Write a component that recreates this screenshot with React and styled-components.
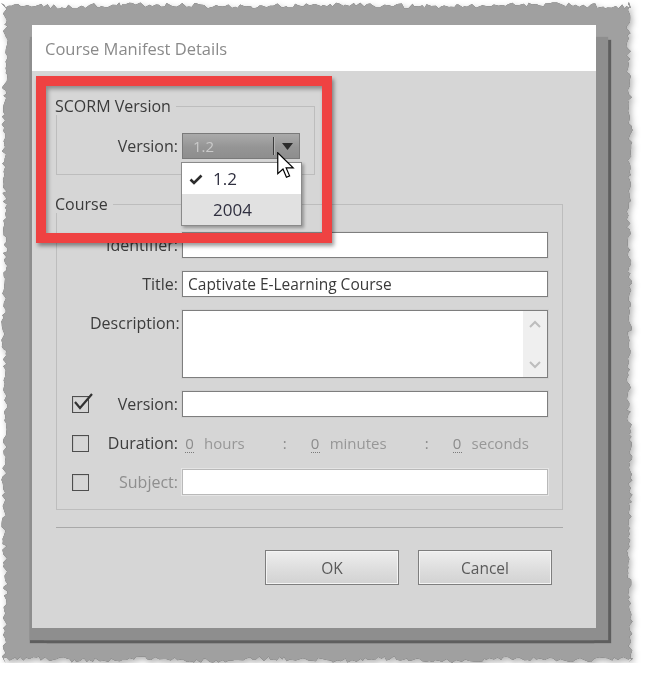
import React from 'react';
import styled, { createGlobalStyle } from 'styled-components';

const GlobalStyle = createGlobalStyle`
  html, body {
    margin: 0;
    padding: 0;
    background: #ffffff;
  }
  body {
    font-family: 'Open Sans', 'Liberation Sans', sans-serif;
  }
`;

// deterministic jagged outline for the torn-paper frame
const seedRand = (seed) => {
  let s = seed;
  return () => {
    s = (s * 16807) % 2147483647;
    return s / 2147483647;
  };
};

const tornEdge = (w, h, amp) => {
  const r = seedRand(11);
  const off = (t, f) => r() * amp * 0.7 + (Math.sin(t / f) + 1) * amp * 0.15;
  const step = () => 1.5 + r() * 3.5;
  const pts = [];
  for (let x = 0; x < w; x += step()) pts.push([x, off(x, 31)]);
  for (let y = 0; y < h; y += step()) pts.push([w - off(y, 27), y]);
  for (let x = w; x > 0; x -= step()) pts.push([x, h - off(x, 19)]);
  for (let y = h; y > 0; y -= step()) pts.push([off(y, 29), y]);
  return `polygon(${pts.map(([x, y]) => `${x.toFixed(1)}px ${y.toFixed(1)}px`).join(', ')})`;
};

const PAPER_W = 632;
const PAPER_H = 661;
const paperClip = tornEdge(PAPER_W, PAPER_H, 7);

const Shadow = styled.div`
  width: ${PAPER_W}px;
  height: ${PAPER_H}px;
  margin: 2px 0 0 1px;
  filter: drop-shadow(0 0 0.6px #555555) drop-shadow(2px 3px 3px rgba(0, 0, 0, 0.3));
`;

const Paper = styled.div`
  width: 100%;
  height: 100%;
  box-sizing: border-box;
  padding: 23px 0 0 31px;
  background: #a0a0a0;
  clip-path: ${paperClip};
`;

const Dialog = styled.div`
  position: relative;
  width: 564px;
  height: 603px;
  background: #d6d6d6;
  box-shadow: 12px 12px 1px 0 #8e8e8e, -2px 12px 1px 0 #8e8e8e, 15px 15px 1px 0 #5e5e5e,
    -2px 15px 1px 0 #5e5e5e;
`;

const TitleBar = styled.div`
  height: 46px;
  display: flex;
  align-items: center;
  padding-left: 13px;
  background: #ffffff;
  font-size: 16.5px;
  color: #8a8a8a;
`;

const Body = styled.div`
  padding: 26px 33px 0 24px;
`;

const Group = styled.fieldset`
  margin: ${(p) => p.$mt || 0}px 0 0 0;
  padding: ${(p) => p.$pad};
  width: ${(p) => p.$w}px;
  box-sizing: border-box;
  min-width: 0;
  border: 1px solid #bdbdbd;
`;

const Legend = styled.legend`
  margin-left: -2px;
  padding: 0 5px 0 0;
  font-size: 16px;
  line-height: 18px;
  color: #3a3a3a;
`;

const SelectRow = styled.div`
  display: flex;
  align-items: center;
`;

const Label = styled.div`
  width: ${(p) => p.$w || 92}px;
  box-sizing: border-box;
  padding-right: 4px;
  text-align: right;
  font-size: 16px;
  line-height: 26px;
  color: ${(p) => (p.$disabled ? '#8e8e8e' : '#3c3c3c')};
  align-self: ${(p) => (p.$top ? 'start' : 'center')};
  white-space: nowrap;
`;

const Select = styled.div`
  position: relative;
  width: 118px;
  height: 26px;
  box-sizing: border-box;
  display: flex;
  align-items: center;
  padding-left: 10px;
  border: 1px solid #7a7a7a;
  background: linear-gradient(#aaaaaa, #959595 55%, #8e8e8e);
  font-size: 15px;
  color: #cacaca;
`;

const SelectValue = styled.span`
  flex: 1;
`;

const SelectDivider = styled.span`
  width: 1px;
  height: 18px;
  background: #3c3c3c;
  box-shadow: 1px 0 0 #b5b5b5;
  margin-right: 8px;
`;

const Menu = styled.div`
  position: absolute;
  left: -2px;
  top: 28px;
  width: 121px;
  box-sizing: border-box;
  border: 1px solid #8a8a8a;
  background: #e1e1e1;
  box-shadow: 2px 2px 3px rgba(0, 0, 0, 0.3);
  z-index: 2;
`;

const MenuItem = styled.div`
  position: relative;
  height: 31px;
  display: flex;
  align-items: center;
  padding-left: 31px;
  font-size: 17px;
  color: #303040;
  background: ${(p) => (p.$active ? '#ffffff' : '#e1e1e1')};
`;

const CheckGlyph = styled.svg`
  position: absolute;
  left: 7px;
  top: 11px;
`;

const Cursor = styled.svg`
  position: absolute;
  left: 94px;
  top: 18px;
  z-index: 3;
`;

const Fields = styled.div`
  display: grid;
  grid-template-columns: 18px 92px 366px;
  row-gap: 13px;
  align-items: center;
  padding-left: 15px;
`;

const Box = styled.span`
  position: relative;
  width: 17px;
  height: 17px;
  box-sizing: border-box;
  border: 1px solid #4e4e4e;
  box-shadow: inset 1px 1px 0 #c8c8c8;
`;

const BoxTick = styled.svg`
  position: absolute;
  left: -1px;
  top: -5px;
  overflow: visible;
`;

const Input = styled.div`
  grid-column: 3;
  height: ${(p) => p.$h || 26}px;
  box-sizing: border-box;
  display: flex;
  align-items: ${(p) => (p.$multi ? 'stretch' : 'center')};
  padding-left: 5px;
  background: #ffffff;
  border: 1px solid ${(p) => (p.$disabled ? '#b9b9b9' : '#7e7e7e')};
  box-shadow: 0 0 0 1px ${(p) => (p.$disabled ? '#e4e4e4' : '#cfcfcf')};
  font-size: 15.5px;
  color: #3a3a3a;
`;

const InputText = styled.span`
  flex: 1;
`;

const ScrollStrip = styled.div`
  width: 24px;
  background: #efefef;
  display: flex;
  flex-direction: column;
  justify-content: space-between;
  align-items: center;
  padding: 9px 0 8px;
`;

const Duration = styled.div`
  grid-column: 3;
  height: 26px;
  display: flex;
  align-items: center;
  font-size: 15px;
  color: #979797;
`;

const Num = styled.span`
  margin-left: 3px;
  width: 9px;
  text-align: center;
  color: #8c8c8c;
  line-height: 18px;
  border-bottom: 1px dotted #7a7a7a;
`;

const Unit = styled.span`
  margin-left: 10px;
  margin-right: ${(p) => (p.$last ? 0 : 38)}px;
`;

const Colon = styled.span`
  margin-right: 21px;
  color: #8a8a8a;
`;

const Separator = styled.div`
  margin-top: 17px;
  height: 1px;
  background: #a9a9a9;
`;

const Buttons = styled.div`
  display: flex;
  justify-content: flex-end;
  gap: 19px;
  margin: 22px 11px 0 0;
`;

const Button = styled.button`
  width: 134px;
  height: 35px;
  box-sizing: border-box;
  border: 1px solid #7e7e7e;
  background: linear-gradient(#eeeeee, #dcdcdc 60%, #d2d2d2);
  box-shadow: inset 0 0 0 1px #f4f4f4;
  font-family: 'Open Sans', 'Liberation Sans', sans-serif;
  font-size: 15.5px;
  color: #5a5a5a;
  padding: 0;
`;

const Highlight = styled.div`
  position: absolute;
  left: 4px;
  top: 51px;
  width: 296px;
  height: 167px;
  box-sizing: border-box;
  border: 10px solid #ef4242;
  box-shadow: 2px 3px 4px rgba(0, 0, 0, 0.4), inset 2px 3px 4px rgba(0, 0, 0, 0.35);
  pointer-events: none;
  z-index: 1;
`;

const Chevron = ({ up }) => (
  <svg width="12" height="8" viewBox="0 0 12 8">
    <polyline
      points={up ? '1,7 6,2 11,7' : '1,1 6,6 11,1'}
      fill="none"
      stroke="#bdbdbd"
      strokeWidth="2"
    />
  </svg>
);

const CheckBox = ({ checked }) => (
  <Box>
    {checked && (
      <BoxTick width="20" height="20" viewBox="0 0 20 20">
        <polyline points="3,10 8,16 20,2" fill="none" stroke="#333333" strokeWidth="2.2" />
      </BoxTick>
    )}
  </Box>
);

const App = () => {
  return (
    <>
      <GlobalStyle />
      <Shadow>
        <Paper>
          <Dialog>
            <TitleBar>Course Manifest Details</TitleBar>
            <Body>
              <Group $w={259} $pad="18px 0 15px 0">
                <Legend>SCORM Version</Legend>
                <SelectRow>
                  <Label $w={125}>Version:</Label>
                  <Select>
                    <SelectValue>1.2</SelectValue>
                    <SelectDivider />
                    <svg width="11" height="7" viewBox="0 0 11 7" style={{ marginRight: 6 }}>
                      <polygon points="0,0 11,0 5.5,7" fill="#2b2b2b" />
                    </svg>
                    <Menu>
                      <MenuItem $active>
                        <CheckGlyph width="14" height="11" viewBox="0 0 14 11">
                          <polyline points="1.5,5.5 5,9 12.5,1.5" fill="none" stroke="#2c2c2c" strokeWidth="2.6" />
                        </CheckGlyph>
                        1.2
                      </MenuItem>
                      <MenuItem>2004</MenuItem>
                    </Menu>
                    <Cursor width="18" height="27" viewBox="0 0 12 18">
                      <path
                        d="M0.5 0.5 L0.5 14.5 L4 11.3 L6.3 16.8 L8.4 15.9 L6.1 10.6 L10.8 10.6 Z"
                        fill="#ffffff"
                        stroke="#000000"
                        strokeWidth="0.8"
                        strokeLinejoin="miter"
                      />
                    </Cursor>
                  </Select>
                </SelectRow>
              </Group>

              <Group $w={507} $mt={20} $pad="19px 14px 14px 0">
                <Legend>Course</Legend>
                <Fields>
                  <Label style={{ gridColumn: 2 }}>Identifier:</Label>
                  <Input />

                  <Label style={{ gridColumn: 2 }}>Title:</Label>
                  <Input>
                    <InputText>Captivate E-Learning Course</InputText>
                  </Input>

                  <Label style={{ gridColumn: 2 }} $top>
                    Description:
                  </Label>
                  <Input $h={68} $multi>
                    <InputText />
                    <ScrollStrip>
                      <Chevron up />
                      <Chevron />
                    </ScrollStrip>
                  </Input>

                  <CheckBox checked />
                  <Label>Version:</Label>
                  <Input />

                  <CheckBox />
                  <Label>Duration:</Label>
                  <Duration>
                    <Num>0</Num>
                    <Unit>hours</Unit>
                    <Colon>:</Colon>
                    <Num>0</Num>
                    <Unit>minutes</Unit>
                    <Colon>:</Colon>
                    <Num>0</Num>
                    <Unit $last>seconds</Unit>
                  </Duration>

                  <CheckBox />
                  <Label $disabled>Subject:</Label>
                  <Input $disabled />
                </Fields>
              </Group>

              <Separator />
              <Buttons>
                <Button>OK</Button>
                <Button>Cancel</Button>
              </Buttons>
            </Body>
            <Highlight />
          </Dialog>
        </Paper>
      </Shadow>
    </>
  );
};

export default App;
